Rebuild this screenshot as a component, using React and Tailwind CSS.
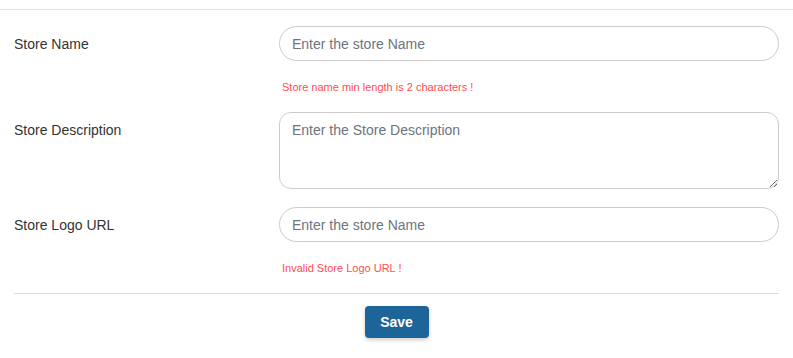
import React from 'react';

function FieldRow({ label, children, error }) {
  return (
    <div className="flex">
      <div className="w-[279px] shrink-0 pl-[14px] pt-[8px] text-[14px] text-[#333]">{label}</div>
      <div className="flex-1">
        {children}
        <p className={`h-[51px] pl-[3px] pt-[21px] text-[11px] leading-none text-[#ff4d4f] ${error ? '' : 'invisible'}`}>
          {error}
        </p>
      </div>
    </div>
  );
}

export default function App() {
  return (
    <div className="w-[793px] h-[358px] bg-white font-['Liberation_Sans',Arial,sans-serif]">
      <div className="pt-[9px] border-b border-[#e0e0e0]" />
      <form className="pt-[16px] pr-[14px]">
        <FieldRow label="Store Name" error="Store name min length is 2 characters !">
          <input
            className="w-full h-[35px] rounded-full border border-[#ccc] px-[12px] text-[14px] text-[#333] placeholder:text-[#6c757d] outline-none"
            placeholder="Enter the store Name"
          />
        </FieldRow>
        <div className="flex pb-[18px]">
          <div className="w-[279px] shrink-0 pl-[14px] pt-[8px] text-[14px] text-[#333]">Store Description</div>
          <textarea
            className="flex-1 h-[77px] rounded-[12px] border border-[#ccc] px-[12px] pt-[7px] text-[14px] text-[#333] placeholder:text-[#6c757d] outline-none block"
            placeholder="Enter the Store Description"
          />
        </div>
        <FieldRow label="Store Logo URL" error="Invalid Store Logo URL !">
          <input
            className="w-full h-[35px] rounded-full border border-[#ccc] px-[12px] text-[14px] text-[#333] placeholder:text-[#6c757d] outline-none"
            placeholder="Enter the store Name"
          />
        </FieldRow>
        <div className="ml-[14px] border-t border-[#ddd]" />
        <div className="flex justify-center pt-[12px] pl-[14px]">
          <button
            type="button"
            className="w-[64px] h-[32px] rounded-[4px] bg-[#1d6599] text-white text-[14px] font-bold shadow-[0_2px_4px_rgba(0,0,0,0.2)]"
          >
            Save
          </button>
        </div>
      </form>
    </div>
  );
}
